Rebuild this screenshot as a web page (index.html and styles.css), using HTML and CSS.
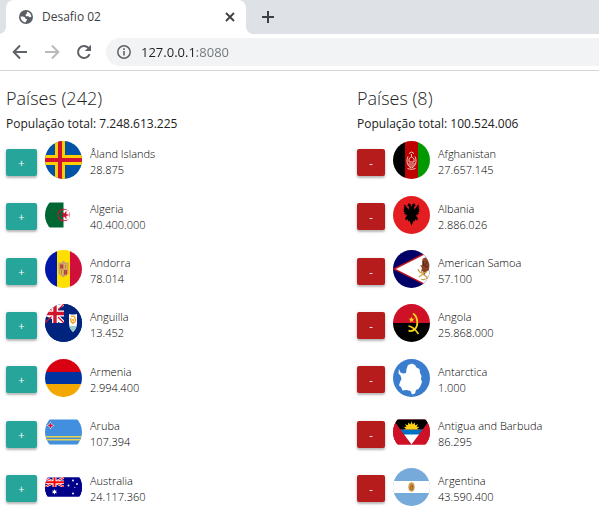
FILE: index.html
```html
<!DOCTYPE html>
<html lang="pt-BR">
<head>
<meta charset="utf-8">
<meta name="viewport" content="width=device-width, initial-scale=1">
<title>Desafio 02</title>
<link rel="stylesheet" href="styles.css">
</head>
<body>
<header class="browser">
  <div class="tabs">
    <div class="tab">
      <svg class="tab-icon" viewBox="0 0 14 14" aria-hidden="true"><circle cx="7" cy="7" r="7" fill="#5a5f64"/><path d="M8 1.800c2.500.4 4.300 2.500 4.400 4.800-1 .9-1.900.8-2.400.1-.5-.7-1.300-.5-2.300-.5-.9 0-1.300-.7-1-1.500.3-.7 1.200-.6 1.200-1.400 0-.6-.1-.8.1-1.500zM1.600 6.500c1.700-.1 3.700 0 4.400.9.600.8 0 1.300 1.200 1.500 1.200.2 1.100 1 .4 1.600-.7.5-.6 1.200-1.100 1.900-2.600-.2-5-2.700-4.900-5.900z" fill="#fff"/></svg>
      <span class="tab-title">Desafio 02</span>
      <button class="icon-button" type="button" aria-label="Fechar guia"><svg width="10" height="10" viewBox="0 0 10 10"><path d="M1 1l8 8M9 1L1 9" stroke="#3c4043" stroke-width="1.800"/></svg></button>
    </div>
    <button class="icon-button" type="button" aria-label="Nova guia"><svg width="12" height="12" viewBox="0 0 12 12"><path d="M6 0v12M0 6h12" stroke="#3c4043" stroke-width="2"/></svg></button>
  </div>
  <div class="toolbar">
    <button class="icon-button" type="button" aria-label="Voltar"><svg width="16" height="16" viewBox="0 0 16 16"><path d="M15 8H2M8 1.500L1.700 8 8 14.500" fill="none" stroke="#5f6368" stroke-width="2"/></svg></button>
    <button class="icon-button" type="button" aria-label="Avançar"><svg width="16" height="16" viewBox="0 0 16 16"><path d="M1 8h13M8 1.500L14.300 8 8 14.500" fill="none" stroke="#bababa" stroke-width="2"/></svg></button>
    <button class="icon-button" type="button" aria-label="Recarregar"><svg width="16" height="16" viewBox="0 0 16 16"><path d="M13.600 10.200A6 6 0 1 1 12.300 3.800L13.500 5" fill="none" stroke="#5f6368" stroke-width="2"/><path d="M15 .8v6.200H8.800z" fill="#5f6368"/></svg></button>
    <div class="address">
      <svg width="14" height="14" viewBox="0 0 14 14" aria-hidden="true"><circle cx="7" cy="7" r="6.200" fill="none" stroke="#5f6368" stroke-width="1.500"/><path d="M7 6v4.500M7 3.300v1.700" stroke="#5f6368" stroke-width="1.600"/></svg>
      <input class="url" type="text" aria-label="Endereço" value="127.0.0.1:8080">
    </div>
  </div>
</header>
<main class="columns">
  <section class="column">
    <h1 class="title">Países (242)</h1>
    <p class="total">População total: 7.248.613.225</p>
    <ul class="list">
      <li class="country">
        <button class="action add" type="button" aria-label="Adicionar Åland Islands">+</button>
        <svg class="flag" viewBox="0 0 37 38" aria-hidden="true"><path fill="#0053a5" d="M0 0h37v38H0z"/><path fill="#ffce00" d="M10 0h10v38H10zM0 14h37v10H0z"/><path fill="#d21034" d="M13 0h4v38h-4zM0 17h37v4H0z"/></svg>
        <p class="info"><span>Åland Islands</span><span>28.875</span></p>
      </li>
      <li class="country">
        <button class="action add" type="button" aria-label="Adicionar Algeria">+</button>
        <svg class="flag" viewBox="0 0 37 38" aria-hidden="true"><path fill="#063" d="M0 6.500h18.500v25H0z"/><circle cx="18.700" cy="19" r="6.300" fill="#d21034"/><path fill="#063" d="M18.500 14a5 5 0 0 0 0 10z"/><path fill="#fff" d="M18.500 14q3-1 6 1.500v7q-3 2.500-6 1.500z"/><path fill="#d21034" d="M24.500 19l-3.100 1.100v3.300l-2-2.600-3.200 1 2-2.800-2-2.800 3.200 1 2-2.600v3.300z"/></svg>
        <p class="info"><span>Algeria</span><span>40.400.000</span></p>
      </li>
      <li class="country">
        <button class="action add" type="button" aria-label="Adicionar Andorra">+</button>
        <svg class="flag" viewBox="0 0 37 38" aria-hidden="true"><path fill="#0018a8" d="M0 0h12v38H0z"/><path fill="#fedf00" d="M12 0h13v38H12z"/><path fill="#d0103a" d="M25 0h12v38H25z"/><path fill="#c7a16c" d="M13.500 12l2.500 1 2.500-2.500 2.500 2.500 2.500-1v10.500c0 3-3 3-5 5-2-2-5-2-5-5z"/><path fill="#c6363c" d="M15 14.500h3.200v4H15zM19 20h3v4.500h-3z"/><path fill="#e9b73b" d="M19 14.500h3v4h-3zM15 20h3.200v4.500H15z"/><path stroke="#8d6b4d" stroke-width=".7" d="M16 15v3M20.500 15v3M16.500 20v4M20.500 20v4"/></svg>
        <p class="info"><span>Andorra</span><span>78.014</span></p>
      </li>
      <li class="country">
        <button class="action add" type="button" aria-label="Adicionar Anguilla">+</button>
        <svg class="flag" viewBox="0 0 37 38" aria-hidden="true"><path fill="#00247d" d="M0 0h37v38H0z"/><path stroke="#fff" stroke-width="3.500" d="M-19 0l38 19M-19 19L19 0M0 0l19 19"/><path stroke="#cf142b" stroke-width="1.300" d="M0 0l19 19M0 19L19 0"/><path fill="#fff" d="M7 0h6v19H7zM0 6.500h19v6H0z"/><path fill="#cf142b" d="M8.300 0h3.400v19H8.300zM0 7.800h19v3.400H0z"/><path fill="#00247d" d="M19 0h18v19H19zM0 19h37v19H0z"/><path fill="#fff" d="M24 10q4 1 8 0v9c0 4-2 7-4 9-2-2-4-5-4-9z"/><path fill="#9acccb" d="M24.200 22h7.600c-.6 2.700-2 4.500-3.800 6-1.800-1.500-3.200-3.300-3.800-6z"/><path fill="none" stroke="#f2a21c" stroke-width="1.400" d="M26 12.500q4-1.500 4 2.500M25.700 14q-.5 4.500 3 5.500M30.500 15q.5 4-3 3.500M27 15.500l2 1"/></svg>
        <p class="info"><span>Anguilla</span><span>13.452</span></p>
      </li>
      <li class="country">
        <button class="action add" type="button" aria-label="Adicionar Armenia">+</button>
        <svg class="flag" viewBox="0 0 37 38" aria-hidden="true"><path fill="#d90012" d="M0 0h37v13H0z"/><path fill="#0033a0" d="M0 13h37v12H0z"/><path fill="#f2a800" d="M0 25h37v13H0z"/></svg>
        <p class="info"><span>Armenia</span><span>2.994.400</span></p>
      </li>
      <li class="country">
        <button class="action add" type="button" aria-label="Adicionar Aruba">+</button>
        <svg class="flag" viewBox="0 0 37 38" aria-hidden="true"><path fill="#418fde" d="M0 6.500h37v25H0z"/><path fill="#e8d44d" d="M0 23h37v1.500H0zM0 26h37v1.500H0z"/><path fill="#fff" d="M5.500 8.500l1.200 2.800 2.800 1.200-2.800 1.200-1.200 2.800-1.200-2.800-2.800-1.200 2.800-1.200z"/><path fill="#d21034" d="M5.500 9.500l.9 2.100 2.100.9-2.100.9-.9 2.100-.9-2.100-2.100-.9 2.100-.9z"/></svg>
        <p class="info"><span>Aruba</span><span>107.394</span></p>
      </li>
      <li class="country">
        <button class="action add" type="button" aria-label="Adicionar Australia">+</button>
        <svg class="flag" viewBox="0 0 37 38" aria-hidden="true"><path fill="#00008b" d="M0 9.500h37v19H0z"/><path stroke="#fff" stroke-width="2.400" d="M0 9.500L19 19M0 19l19-9.500"/><path stroke="#f00" stroke-width="1" d="M0 9.500L19 19M0 19l19-9.500"/><path fill="#fff" d="M7.500 9.500h4V19h-4zM0 12.500h19v3.600H0z"/><path fill="#f00" d="M8.500 9.500h2V19h-2zM0 13.300h19v2H0z"/><path fill="#00008b" d="M19 9.500h18v19H19zM0 19h37v9.500H0z"/><path fill="#fff" d="M9.500 21l.7 1.700 1.800-.3-1.100 1.400 1.100 1.500-1.800-.2-.7 1.700-.7-1.700-1.800.2 1.100-1.500-1.100-1.400 1.800.3z"/><g fill="#fff"><circle cx="28" cy="12.500" r=".9"/><circle cx="23.500" cy="17.500" r=".9"/><circle cx="32" cy="16" r=".9"/><circle cx="28" cy="25.500" r="1"/><circle cx="29.800" cy="19.500" r=".5"/></g></svg>
        <p class="info"><span>Australia</span><span>24.117.360</span></p>
      </li>
    </ul>
  </section>
  <section class="column">
    <h1 class="title">Países (8)</h1>
    <p class="total">População total: 100.524.006</p>
    <ul class="list">
      <li class="country">
        <button class="action remove" type="button" aria-label="Remover Afghanistan">-</button>
        <svg class="flag" viewBox="0 0 37 38" aria-hidden="true"><path fill="#000" d="M0 0h12v38H0z"/><path fill="#bf0000" d="M12 0h13v38H12z"/><path fill="#090" d="M25 0h12v38H25z"/><g fill="none" stroke="#efc4bd" stroke-width="1"><path d="M15 15.500c-2 4-1 10 3.500 11.500 4.500-1.500 5.500-7.500 3.500-11.500M16 21v-3q2.500-4 5 0v3zM18.500 16v-3M16 12.500q2.500-3 5 0M15 23h7M16 25h5M14.500 27.500q4 2 8 0"/></g></svg>
        <p class="info"><span>Afghanistan</span><span>27.657.145</span></p>
      </li>
      <li class="country">
        <button class="action remove" type="button" aria-label="Remover Albania">-</button>
        <svg class="flag" viewBox="0 0 37 38" aria-hidden="true"><path fill="#e41e20" d="M0 0h37v38H0z"/><path d="M18.500 11l-1-3-2.500-.8.500 1.300-1.500.8 1.800 1.300v3l-1.500-1.500-2.500-3.500-.8 1 .8 2-1.200-.3.700 2-1.200.2 1.200 1.500-1 .6 1.600 1-1.100 1.200 2.200.2-1 1.600 2.500-.8-2.700 4.300 1.200.3-.4 1.500 2-1.800.7 2.500 1-1 2.200 5 2.200-5 1 1 .7-2.500 2 1.800-.4-1.500 1.200-.3-2.700-4.300 2.500.8-1-1.600 2.200-.2-1.100-1.200 1.600-1-1-.6 1.200-1.500-1.200-.2.700-2-1.200.3.800-2-.8-1-2.500 3.500-1.500 1.500v-3l1.800-1.300-1.500-.8.500-1.300-2.500.8z"/></svg>
        <p class="info"><span>Albania</span><span>2.886.026</span></p>
      </li>
      <li class="country">
        <button class="action remove" type="button" aria-label="Remover American Samoa">-</button>
        <svg class="flag" viewBox="0 0 37 38" aria-hidden="true"><path fill="#006" d="M0 0h37v38H0z"/><path fill="#fff" stroke="#bd1021" stroke-width="1.500" d="M1 19L39 0v38z"/><path fill="#8b4223" d="M29.500 9q3-3 5 0l1.500 4v7l-3 2-2 4-1-5-2 1 1-4-2-3 2 .5z"/><path fill="none" stroke="#542915" stroke-width="1" d="M30 11l1 5 3-4M32 17l3-1"/><path fill="none" stroke="#c9a24a" stroke-width="1.200" d="M25 19q1 4 5 4l4-1M26 27l4-3 5 4M28 29q4 2 7-2"/></svg>
        <p class="info"><span>American Samoa</span><span>57.100</span></p>
      </li>
      <li class="country">
        <button class="action remove" type="button" aria-label="Remover Angola">-</button>
        <svg class="flag" viewBox="0 0 37 38" aria-hidden="true"><path fill="#ce1126" d="M0 0h37v19H0z"/><path fill="#000" d="M0 19h37v19H0z"/><path fill="none" stroke="#f9d616" stroke-width="1.800" d="M20 9.500c5 3 5.500 12 2 15.500-2 2-4.500 2.500-6.500 1.500"/><path stroke="#f9d616" stroke-width="1.500" d="M15.500 22q5 .5 10 8" fill="none"/><path fill="#f9d616" d="M18.500 12.500l.8 2.200h2.300l-1.900 1.400.7 2.200-1.900-1.300-1.900 1.300.7-2.200-1.900-1.400h2.300z"/></svg>
        <p class="info"><span>Angola</span><span>25.868.000</span></p>
      </li>
      <li class="country">
        <button class="action remove" type="button" aria-label="Remover Antarctica">-</button>
        <svg class="flag" viewBox="0 0 37 38" aria-hidden="true"><path fill="#3a7dce" d="M0 0h37v38H0z"/><path fill="#fff" d="M6 10l1.500 3.500 2.500 1 3-.5.500-4 1.500-4 4-1.500 3 1.500 1.500 2.500 3 1.500.5 4 1.500 3-.5 3 1 3-1.500 4-2 3-2.500 1-1 3.500-3 1-1.500-3.500-4-1-4 .5-1.500-3.500-2-1.500 1-3.500 1.500-3-1-3.500-2-2z"/></svg>
        <p class="info"><span>Antarctica</span><span>1.000</span></p>
      </li>
      <li class="country">
        <button class="action remove" type="button" aria-label="Remover Antigua and Barbuda">-</button>
        <svg class="flag" viewBox="0 0 37 38" aria-hidden="true"><path fill="#ce1126" d="M0 6.500h37v25H0z"/><path fill="#000" d="M0 6.500h37L33 16.500H4z"/><path fill="#0072c6" d="M6 16.500h25l-4 6H10z"/><path fill="#fff" d="M9.500 21.500h18l-9 10z"/><path fill="#ce1126" d="M0 6.500l18.500 25H0zM37 6.500l-18.500 25H37z"/><path fill="#fcd116" d="M11 16.500l2-1-2.500-1.500 3-.2-1.500-2.500 3 1 .2-2.700 2.100 2 1.200-3 1.200 3 2.100-2 .2 2.700 3-1-1.500 2.500 3 .2-2.500 1.500 2 1z"/></svg>
        <p class="info"><span>Antigua and Barbuda</span><span>86.295</span></p>
      </li>
      <li class="country">
        <button class="action remove" type="button" aria-label="Remover Argentina">-</button>
        <svg class="flag" viewBox="0 0 37 38" aria-hidden="true"><path fill="#75aadb" d="M0 0h37v38H0z"/><path fill="#fff" d="M0 13h37v12H0z"/><path fill="#d9a04b" d="M18.500 14l2.500 1.500.8 3.500-.8 3.500-2.500 1.500-2.500-1.500-.8-3.500.8-3.500z"/><path fill="none" stroke="#85501f" stroke-width=".8" d="M17.200 17h2.600v1.800h-2.600v2.500h2.600v-2.500"/></svg>
        <p class="info"><span>Argentina</span><span>43.590.400</span></p>
      </li>
    </ul>
  </section>
</main>
</body>
</html>
```
FILE: styles.css
```css
* {
  box-sizing: border-box;
}

body {
  display: flex;
  flex-direction: column;
  min-height: 100vh;
  margin: 0;
  background: #fff;
  color: #212121;
  font-family: "Open Sans", "Noto Sans", sans-serif;
}

button,
input {
  padding: 0;
  border: 0;
  font-family: inherit;
}

/* Browser frame */
.tabs {
  display: flex;
  align-items: center;
  gap: 16px;
  height: 34px;
  padding-left: 6px;
  background: #dee1e6;
}

.tab {
  position: relative;
  display: flex;
  align-items: center;
  gap: 9px;
  width: 240px;
  height: 34px;
  padding: 0 11px 0 13px;
  border-radius: 8px 8px 0 0;
  background: #fff;
}

.tab::before,
.tab::after {
  content: "";
  position: absolute;
  bottom: 0;
  width: 8px;
  height: 8px;
}

.tab::before {
  right: 100%;
  background: radial-gradient(circle at 0 0, #dee1e6 8px, #fff 8px);
}

.tab::after {
  left: 100%;
  background: radial-gradient(circle at 100% 0, #dee1e6 8px, #fff 8px);
}

.tab-icon {
  width: 14px;
  height: 14px;
}

.tab-title {
  flex: 1;
  color: #3c4043;
  font-size: 12px;
  line-height: 16px;
}

.icon-button {
  display: flex;
  background: none;
}

.toolbar {
  display: flex;
  align-items: center;
  gap: 16px;
  padding: 4px 0 4px 12px;
  border-bottom: 1px solid #d6d6d8;
}

.address {
  display: flex;
  flex: 1;
  align-items: center;
  gap: 10px;
  height: 28px;
  margin-left: -2px;
  padding-left: 11px;
  border-radius: 14px 0 0 14px;
  background: #f1f3f4;
}

.url {
  flex: 1;
  min-width: 0;
  height: 20px;
  background: linear-gradient(90deg, #202124 56px, #70757a 56px);
  -webkit-background-clip: text;
  background-clip: text;
  color: transparent;
  caret-color: #202124;
  font-size: 13px;
  line-height: 20px;
}

/* Country lists */
.columns {
  display: grid;
  flex: 1;
  grid-template-columns: 3fr 2fr;
  padding: 15px 8px 7px 6px;
}

.column {
  display: flex;
  flex-direction: column;
}

.title {
  margin: 0;
  font-size: 18px;
  font-weight: 300;
  line-height: 24px;
}

.total {
  margin: 5px 0 0;
  font-size: 12px;
  line-height: 18px;
}

.list {
  display: grid;
  flex: 1;
  grid-auto-rows: 1fr;
  margin: 0;
  padding: 0;
  list-style: none;
}

.country {
  display: flex;
  align-items: center;
  gap: 8px;
}

.action {
  height: 27px;
  margin-top: 4px;
  border-radius: 2px;
  box-shadow: 0 2px 2px rgba(0, 0, 0, 0.2), 0 1px 4px rgba(0, 0, 0, 0.15);
  color: #fff;
  font-size: 11px;
  line-height: 25px;
}

.add {
  width: 31px;
  background: #26a69a;
}

.remove {
  width: 28px;
  background: #b71c1c;
}

.flag {
  width: 37px;
  height: 38px;
  border-radius: 50%;
}

.info {
  display: flex;
  flex-direction: column;
  margin: 4px 0 0;
  color: #000;
  font-size: 11px;
  font-weight: 300;
  line-height: 16px;
}
```
